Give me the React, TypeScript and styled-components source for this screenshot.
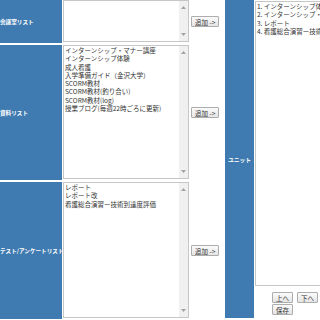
import React from "react";
import styled, { createGlobalStyle } from "styled-components";

const GlobalStyle = createGlobalStyle`
  html, body {
    margin: 0;
    padding: 0;
    overflow: hidden;
    background: #ffffff;
    font-family: "Noto Sans CJK JP", "Noto Sans", sans-serif;
  }
`;

const materials = [
  "インターンシップ・マナー講座",
  "インターンシップ体験",
  "成人看護",
  "入学準備ガイド（金沢大学）",
  "SCORM教材",
  "SCORM教材(釣り合い)",
  "SCORM教材(log)",
  "授業ブログ(毎週22時ごろに更新)",
];

const tests = ["レポート", "レポート改", "看護総合演習ー技術到達度評価"];

const units = [
  "1. インターンシップ体験",
  "2. インターンシップ・マナー講座",
  "3. レポート",
  "4. 看護総合演習ー技術到達度評価",
];

const rows = [
  { label: "会議室リスト", items: [] as string[] },
  { label: "資料リスト", items: materials },
  { label: "テスト/アンケートリスト", items: tests },
];

const Arrow = ({ down }: { down?: boolean }) => (
  <svg width="5" height="3" viewBox="0 0 5 3">
    <polygon points={down ? "0,0 5,0 2.5,3" : "0,3 5,3 2.5,0"} fill="#a3a3a3" />
  </svg>
);

const ListBox = ({ items }: { items: string[] }) => (
  <Box>
    <Options>
      {items.map((item) => (
        <Option key={item}>{item}</Option>
      ))}
    </Options>
    <ScrollTrack>
      <Arrow />
      <Arrow down />
    </ScrollTrack>
  </Box>
);

export default function App() {
  return (
    <>
      <GlobalStyle />
      <Layout>
        {rows.map((row, i) => (
          <React.Fragment key={row.label}>
            <HeaderCell row={i + 1}>{row.label}</HeaderCell>
            <ListCell row={i + 1}>
              <ListBox items={row.items} />
            </ListCell>
            <AddCell row={i + 1}>
              <Button>追加 -&gt;</Button>
            </AddCell>
          </React.Fragment>
        ))}
        <UnitCell>ユニット</UnitCell>
        <RightPane>
          <UnitBox>
            {units.map((u) => (
              <Option key={u}>{u}</Option>
            ))}
          </UnitBox>
          <ButtonRow>
            <Button>上へ</Button>
            <Button>下へ</Button>
          </ButtonRow>
          <ButtonRow>
            <Button>保存</Button>
            <Button $gap={26}>削除</Button>
          </ButtonRow>
        </RightPane>
      </Layout>
    </>
  );
}

const Layout = styled.div`
  display: grid;
  grid-template-columns: 62px 126px 34px 29px 90px;
  grid-template-rows: 43px 135px 137px;
  column-gap: 1px;
  row-gap: 2px;
  width: 345px;
  height: 319px;
`;

const HeaderCell = styled.div<{ row: number }>`
  grid-column: 1;
  grid-row: ${(p) => p.row};
  display: flex;
  align-items: center;
  background: #3f7bb0;
  color: #ffffff;
  font-size: 5.6px;
  font-weight: bold;
  white-space: nowrap;
  overflow: hidden;
`;

const ListCell = styled.div<{ row: number }>`
  grid-column: 2;
  grid-row: ${(p) => p.row};
  display: flex;
  padding-bottom: 1px;
`;

const AddCell = styled.div<{ row: number }>`
  grid-column: 3;
  grid-row: ${(p) => p.row};
  display: flex;
  align-items: center;
  padding-left: 1px;
`;

const Box = styled.div`
  flex: 1;
  display: flex;
  border: 1px solid #c6c6c6;
  background: #ffffff;
`;

const Options = styled.div`
  flex: 1;
  padding: 0 1px;
  overflow: hidden;
`;

const Option = styled.div`
  font-size: 6.5px;
  line-height: 8.3px;
  color: #333333;
  white-space: nowrap;
`;

const ScrollTrack = styled.div`
  width: 9px;
  background: #f0f0f0;
  display: flex;
  flex-direction: column;
  justify-content: space-between;
  align-items: center;
  padding: 5px 0;
`;

const Button = styled.button<{ $gap?: number }>`
  height: 11px;
  margin: 0 0 0 ${(p) => p.$gap ?? 0}px;
  padding: 0 3px;
  font-family: inherit;
  font-size: 6.5px;
  line-height: 8px;
  color: #333333;
  background: linear-gradient(#fbfbfb, #e4e4e4);
  border: 1px solid #adadad;
  border-radius: 1px;
  white-space: nowrap;
`;

const UnitCell = styled.div`
  grid-column: 4;
  grid-row: 1 / 4;
  display: flex;
  align-items: center;
  justify-content: center;
  background: #3f7bb0;
  color: #ffffff;
  font-size: 5.8px;
  font-weight: bold;
  margin-bottom: 1px;
`;

const RightPane = styled.div`
  grid-column: 5;
  grid-row: 1 / 4;
  display: flex;
  flex-direction: column;
  padding-top: 1px;
`;

const UnitBox = styled.div`
  height: 285px;
  box-sizing: border-box;
  border: 1px solid #c6c6c6;
  padding: 0 1px;
  margin-bottom: 6px;
`;

const ButtonRow = styled.div`
  display: flex;
  gap: 4px;
  padding-left: 17px;
  margin-bottom: 1px;
`;
